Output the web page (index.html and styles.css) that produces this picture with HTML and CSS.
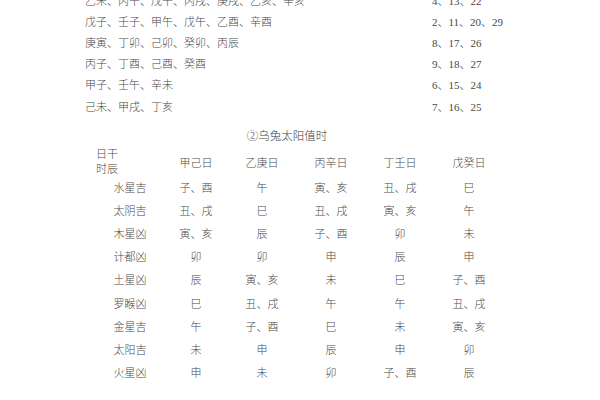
FILE: index.html
```html
<!DOCTYPE html>
<html lang="zh">
<head>
<meta charset="utf-8">
<link rel="stylesheet" href="styles.css">
</head>
<body>
<div class="page">
  <div class="list">
    <div>乙未、丙午、戊午、丙戌、庚戌、乙亥、辛亥</div><div class="num">4、13、22</div>
    <div>戊子、壬子、甲午、戊午、乙酉、辛酉</div><div class="num">2、11、20、29</div>
    <div>庚寅、丁卯、己卯、癸卯、丙辰</div><div class="num">8、17、26</div>
    <div>丙子、丁酉、己酉、癸酉</div><div class="num">9、18、27</div>
    <div>甲子、壬午、辛未</div><div class="num">6、15、24</div>
    <div>己未、甲戌、丁亥</div><div class="num">7、16、25</div>
  </div>
  <div class="title">②乌兔太阳值时</div>
  <div class="table">
    <div class="corner"><span>日干</span><span>时辰</span></div>
    <div class="hd">甲己日</div><div class="hd">乙庚日</div><div class="hd">丙辛日</div><div class="hd">丁壬日</div><div class="hd">戊癸日</div>

    <div class="c">水星吉</div><div class="c">子、酉</div><div class="c">午</div><div class="c">寅、亥</div><div class="c">丑、戌</div><div class="c">巳</div>
    <div class="c">太阴吉</div><div class="c">丑、戌</div><div class="c">巳</div><div class="c">丑、戌</div><div class="c">寅、亥</div><div class="c">午</div>
    <div class="c">木星凶</div><div class="c">寅、亥</div><div class="c">辰</div><div class="c">子、酉</div><div class="c">卯</div><div class="c">未</div>
    <div class="c">计都凶</div><div class="c">卯</div><div class="c">卯</div><div class="c">申</div><div class="c">辰</div><div class="c">申</div>
    <div class="c">土星凶</div><div class="c">辰</div><div class="c">寅、亥</div><div class="c">未</div><div class="c">巳</div><div class="c">子、酉</div>
    <div class="c">罗睺凶</div><div class="c">巳</div><div class="c">丑、戌</div><div class="c">午</div><div class="c">午</div><div class="c">丑、戌</div>
    <div class="c">金星吉</div><div class="c">午</div><div class="c">子、酉</div><div class="c">巳</div><div class="c">未</div><div class="c">寅、亥</div>
    <div class="c">太阳吉</div><div class="c">未</div><div class="c">申</div><div class="c">辰</div><div class="c">申</div><div class="c">卯</div>
    <div class="c">火星凶</div><div class="c">申</div><div class="c">未</div><div class="c">卯</div><div class="c">子、酉</div><div class="c">辰</div>
  </div>
</div>
</body>
</html>
```

FILE: styles.css
```css
html, body {
  margin: 0;
  padding: 0;
  background: #ffffff;
  overflow: hidden;
}
body {
  width: 600px;
  height: 400px;
  font-family: "Liberation Serif", "Noto Sans CJK SC", serif;
  color: #4a4a4a;
  font-size: 11px;
}
.page {
  display: flex;
  flex-direction: column;
}
.list {
  margin-top: -10px;
  padding-left: 85px;
  display: grid;
  grid-template-columns: 347px auto;
  grid-auto-rows: 21.2px;
  align-items: center;
  line-height: 14px;
  font-weight: 300;
}
.num {
  font-size: 11px;
}
.title {
  margin-top: 11px;
  margin-left: 245px;
  width: 84px;
  height: 16px;
  line-height: 16px;
  font-size: 11.5px;
  font-weight: 300;
  text-align: center;
  white-space: nowrap;
  color: #3c3c3c;
}
.table {
  margin-top: 3px;
  margin-left: 96px;
  display: grid;
  grid-template-columns: 68px 64px 68px 70px 68px 70px;
  grid-template-rows: 29px;
  grid-auto-rows: 23.2px;
  align-items: center;
  font-weight: 300;
}
.corner {
  display: flex;
  flex-direction: column;
  line-height: 15.5px;
  margin-top: 1px;
}
.hd, .c {
  text-align: center;
  line-height: 14px;
  white-space: nowrap;
}
.hd {
  margin-top: 2px;
}
```
